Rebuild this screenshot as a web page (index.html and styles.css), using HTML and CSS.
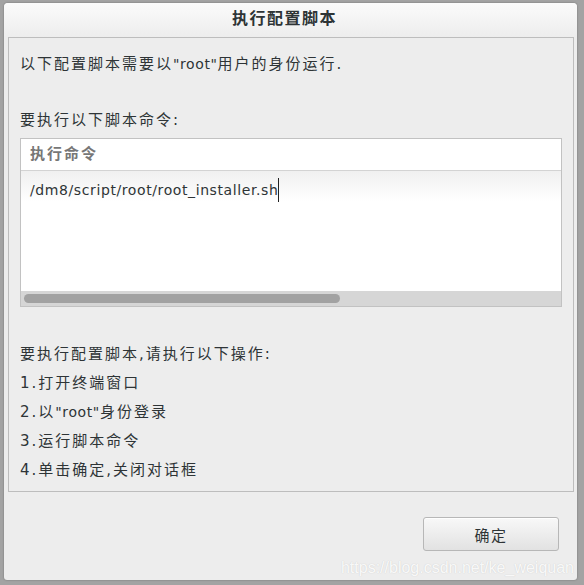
FILE: index.html
```html
<!DOCTYPE html>
<html lang="zh-CN">
<head>
<meta charset="utf-8">
<title>执行配置脚本</title>
<link rel="stylesheet" href="styles.css">
</head>
<body>
<div class="dialog">
  <div class="titlebar">执行配置脚本</div>
  <div class="frame">
    <p class="line first">以下配置脚本需要以<span class="latin">"root"</span>用户的身份运行.</p>
    <p class="line second">要执行以下脚本命令:</p>
    <div class="table">
      <div class="thead">执行命令</div>
      <div class="tbody">
        <div class="row"><span class="cmd">/dm8/script/root/root_installer.sh</span><span class="caret"></span></div>
      </div>
      <div class="hscroll"><div class="thumb"></div></div>
    </div>
    <div class="steps">
      <p class="line">要执行配置脚本,请执行以下操作:</p>
      <p class="line">1.打开终端窗口</p>
      <p class="line">2.以<span class="latin">"root"</span>身份登录</p>
      <p class="line">3.运行脚本命令</p>
      <p class="line">4.单击确定,关闭对话框</p>
    </div>
  </div>
  <div class="actions">
    <button class="btn">确定</button>
  </div>
  <div class="watermark">https://blog.csdn.net/ke_weiquan</div>
</div>
</body>
</html>
```
FILE: styles.css
```css
html, body {
  margin: 0;
  padding: 0;
}
body {
  width: 584px;
  height: 585px;
  overflow: hidden;
  background: #a3a3a3;
  font-family: "DejaVu Sans", "Noto Sans CJK SC", sans-serif;
  color: #2e3436;
}
.dialog {
  position: relative;
  margin: 3px 7px 0 4px;
  height: 577px;
  background: #ededed;
  border-radius: 4px 4px 3px 3px;
  box-shadow: 0 0 2px rgba(0,0,0,0.35);
  display: flex;
  flex-direction: column;
}
.titlebar {
  height: 34px;
  line-height: 32px;
  text-align: center;
  padding-right: 12px;
  font-weight: bold;
  font-size: 16px;
  letter-spacing: 1.5px;
  color: #2e3436;
  background: linear-gradient(#fbfbfb, #ededed);
  border-radius: 4px 4px 0 0;
}
.frame {
  margin: 0 3px 0 4px;
  height: 455px;
  border: 1px solid #bdbdbd;
  padding: 0 11px;
  box-sizing: border-box;
}
.line {
  margin: 0;
  font-size: 15px;
  line-height: 20px;
  height: 20px;
  letter-spacing: 2px;
  white-space: nowrap;
}
.latin {
  font-size: 14px;
  letter-spacing: 0.6px;
}
.line.first {
  margin-top: 16px;
}
.line.second {
  margin-top: 36px;
}
.table {
  margin-top: 8px;
  height: 169px;
  border: 1px solid #c2c2c2;
  background: #fff;
  box-sizing: border-box;
  display: flex;
  flex-direction: column;
}
.thead {
  height: 32px;
  line-height: 31px;
  padding-left: 9px;
  font-size: 15px;
  font-weight: bold;
  letter-spacing: 2px;
  color: #777;
  border-bottom: 1px solid #d3d3d3;
  box-sizing: border-box;
}
.tbody {
  flex: 1;
  background: linear-gradient(#f0f0f0, #ffffff 30px);
}
.row {
  display: flex;
  align-items: center;
  height: 38px;
  padding-left: 9px;
  font-size: 14px;
  letter-spacing: 0.6px;
}
.cmd {
  color: #2e3436;
}
.caret {
  width: 1px;
  height: 24px;
  background: #222;
}
.hscroll {
  height: 15px;
  background: #d6d6d6;
  padding: 3px 3px 0 3px;
  box-sizing: border-box;
}
.thumb {
  width: 316px;
  height: 9px;
  border-radius: 5px;
  background: #a2a2a2;
}
.steps {
  margin-top: 37px;
  display: flex;
  flex-direction: column;
  gap: 9px;
}
.actions {
  display: flex;
  justify-content: flex-end;
  padding: 25px 18px 0 0;
}
.btn {
  width: 136px;
  height: 34px;
  border: 1px solid #b7b7b7;
  border-radius: 3px;
  background: linear-gradient(#f8f8f8, #e2e2e2);
  box-shadow: 0 1px 0 rgba(255,255,255,0.8) inset;
  font-family: "DejaVu Sans", "Noto Sans CJK SC", sans-serif;
  font-size: 15px;
  letter-spacing: 1.5px;
  color: #2e3436;
  padding: 0;
}
.watermark {
  position: absolute;
  right: 3px;
  bottom: 3px;
  font-family: "Liberation Sans", Arial, sans-serif;
  font-size: 16px;
  color: rgba(255,255,255,0.9);
  text-shadow: 0 0 1px rgba(150,150,150,0.45);
}
```
